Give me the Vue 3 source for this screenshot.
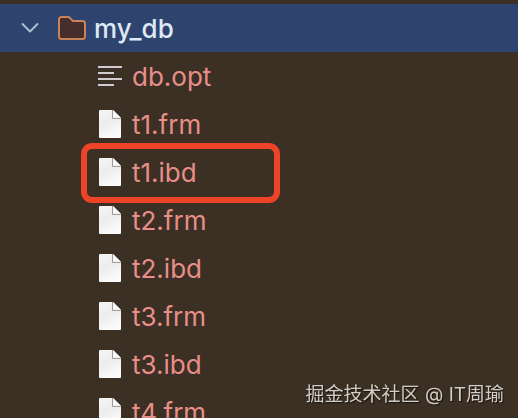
<script setup>
import { ref } from 'vue'

const open = ref(true)
const files = [
  { name: 'db.opt', kind: 'text' },
  { name: 't1.frm', kind: 'file' },
  { name: 't1.ibd', kind: 'file', marked: true },
  { name: 't2.frm', kind: 'file' },
  { name: 't2.ibd', kind: 'file' },
  { name: 't3.frm', kind: 'file' },
  { name: 't3.ibd', kind: 'file' },
  { name: 't4.frm', kind: 'file' },
]
</script>

<template>
  <main class="explorer">
    <button class="folder" type="button" :aria-expanded="open" @click="open = !open">
      <svg class="chevron" width="20" height="12" viewBox="0 0 20 12" aria-hidden="true">
        <path d="M2.5 2 10 9.5 17.5 2" fill="none" stroke="#b3c3d6" stroke-width="1.8" stroke-linecap="round" stroke-linejoin="round" />
      </svg>
      <svg width="28" height="24" viewBox="0 0 28 24" aria-hidden="true">
        <path d="M1 3.5A2.5 2.5 0 0 1 3.5 1H10q1 0 1.7.7L15 5H24.5A2.5 2.5 0 0 1 27 7.5V20.5A2.5 2.5 0 0 1 24.5 23H3.5A2.5 2.5 0 0 1 1 20.5Z" fill="#452e2b" stroke="#c8835a" stroke-width="2" stroke-linejoin="round" />
      </svg>
      <span class="name">my_db</span>
    </button>
    <ul v-if="open" class="files">
      <li v-for="file in files" :key="file.name" class="file">
        <svg v-if="file.kind === 'text'" width="24" height="28" viewBox="0 0 24 28" aria-hidden="true">
          <path d="M0 5h24M0 11h16M0 17h24M0 23h16" stroke="#d2cdd0" stroke-width="2" />
        </svg>
        <svg v-else width="24" height="28" viewBox="0 0 24 28" aria-hidden="true">
          <defs>
            <linearGradient :id="'paper-' + file.name" x1="0" y1="0" x2="0.4" y2="1">
              <stop offset="0" stop-color="#f6f6f6" />
              <stop offset="0.5" stop-color="#ececec" />
              <stop offset="1" stop-color="#fafafa" />
            </linearGradient>
          </defs>
          <path d="M2 0H15L23 8V27a1 1 0 0 1-1 1H2a1 1 0 0 1-1-1V1a1 1 0 0 1 1-1Z" :fill="`url(#paper-${file.name})`" />
          <path d="M14 0H15L23 8V9H15a1 1 0 0 1-1-1Z" fill="#9c9995" />
          <path d="M15 0 23 8H15.5a.5.5 0 0 1-.5-.5Z" fill="#f7f7f7" />
        </svg>
        <span class="name">{{ file.name }}</span>
        <i v-if="file.marked" class="marker"></i>
      </li>
    </ul>
    <p class="watermark">掘金技术社区 @ IT周瑜</p>
  </main>
</template>

<style>
body {
  margin: 0;
  background: #3c3024;
}
</style>

<style scoped>
.explorer {
  box-sizing: border-box;
  height: 100vh;
  padding-top: 4px;
  overflow: hidden;
  background: #3c3024;
  font-family: Inter, "Noto Sans CJK SC", sans-serif;
  font-size: 26px;
  line-height: 32px;
}

.folder {
  display: flex;
  align-items: center;
  width: 100%;
  height: 48px;
  margin: 0;
  padding: 0 20px;
  border: 0;
  background: #2e436e;
  color: #dfe8f5;
  font: inherit;
  font-weight: 500;
  text-align: left;
  gap: 8px;
}

.chevron {
  margin-right: 10px;
}

.name {
  padding-top: 2px;
}

.files {
  margin: 0;
  padding: 0 0 0 98px;
  list-style: none;
}

.file {
  position: relative;
  display: flex;
  align-items: center;
  width: 176px;
  height: 48px;
  gap: 10px;
  color: #e88e89;
}

.marker {
  position: absolute;
  inset: -5px -6px -7px -17px;
  border: 6px solid #ee4328;
  border-radius: 11px;
}

.watermark {
  position: fixed;
  right: 14px;
  bottom: 9px;
  margin: 0;
  color: #d2cdc6;
  font-family: Inter, "Noto Sans CJK SC", sans-serif;
  font-size: 19px;
  line-height: 28px;
  text-shadow: 1px 1px 1px #17120d;
}
</style>
